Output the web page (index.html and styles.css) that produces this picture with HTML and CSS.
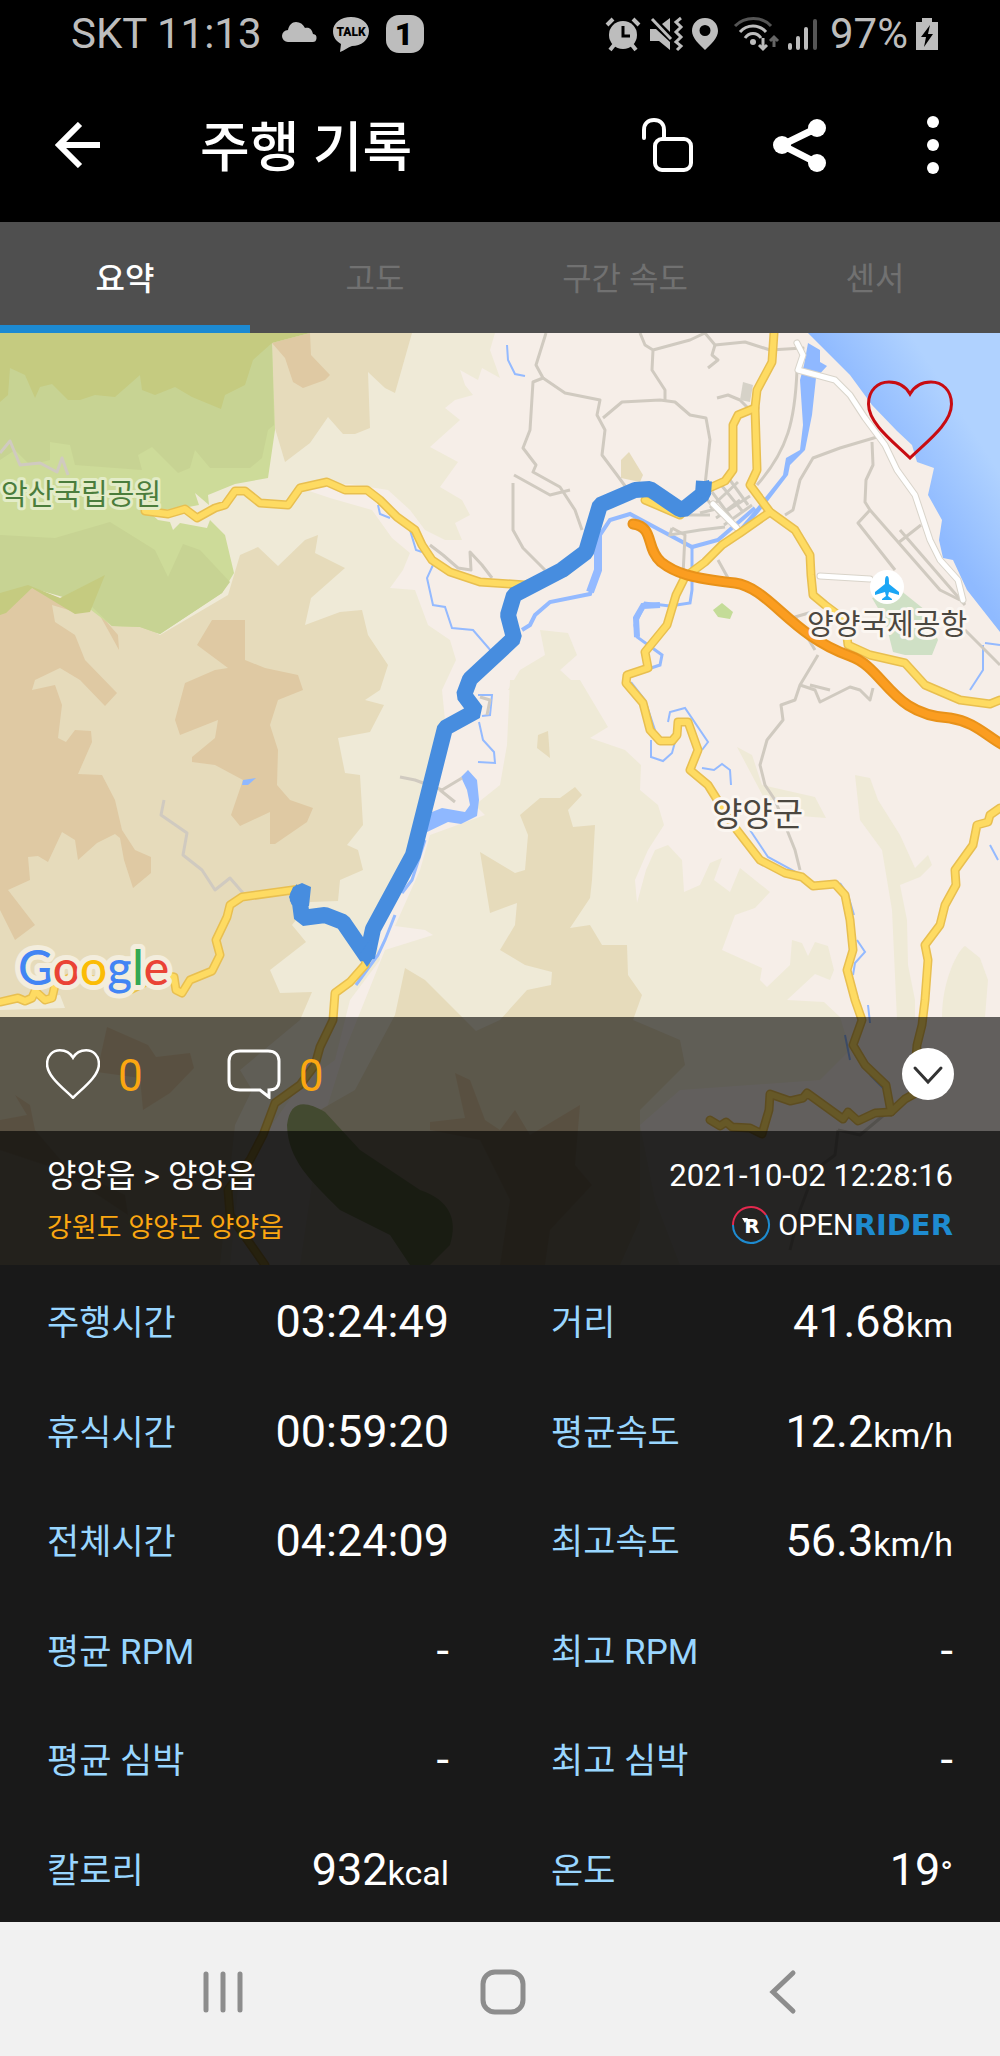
FILE: index.html
```html
<!DOCTYPE html>
<html lang="ko">
<head>
    <meta charset="UTF-8">
    <meta name="viewport" content="width=device-width, initial-scale=1.0">
    <title>주행 기록</title>
    <link rel="stylesheet" href="styles.css">
</head>
<body>
    <!-- shared shapes -->
    <svg class="defs" aria-hidden="true">
        <symbol id="heart" viewBox="0 0 86 80">
            <path d="M43 78 C28 63 1.500 44 1.500 24 C1.500 10 11 2 22 2 C32 2 39 7 43 14 C47 7 54 2 64 2 C75 2 84.500 10 84.500 24 C84.500 44 58 63 43 78 Z"/>
        </symbol>
    </svg>

    <div class="status-bar">
        <div class="status-left">
            <span class="status-text">SKT 11:13</span>
            <svg width="36" height="36" viewBox="0 0 36 36"><path d="M7 26 a6 6 0 0 1 0 -12 C8 9 11 6 15 6 C19 6 22 8 24 12 C29 11 31 14 32 18 a4 4 0 0 1 -1 8 Z" fill="#bdbdbd"/></svg>
            <svg width="38" height="38" viewBox="0 0 38 38">
                <path d="M19 2 C29 2 37 8 37 16 C37 25 29 31 20 31 C16 32 12 36 8 37 L9 29 C4 26 1 22 1 16 C1 8 9 2 19 2 Z" fill="#bdbdbd"/>
                <text x="19" y="21" class="talk">TALK</text>
            </svg>
            <svg width="40" height="40" viewBox="0 0 40 40">
                <rect x="1" y="1" width="38" height="38" rx="13" fill="#bdbdbd"/>
                <text x="19" y="31" class="one">1</text>
            </svg>
        </div>
        <div class="status-right">
            <!-- alarm -->
            <svg width="36" height="36" viewBox="0 0 36 36">
                <circle cx="18" cy="19" r="14" fill="#bdbdbd"/>
                <path d="M2 9 L8 3 M34 9 L28 3" stroke="#bdbdbd" stroke-width="4" fill="none"/>
                <path d="M5 34 L9 29 M31 34 L27 29" stroke="#bdbdbd" stroke-width="4"/>
                <path d="M18 10 V20 H25" stroke="#000" stroke-width="3" fill="none"/>
            </svg>
            <!-- mute / vibrate -->
            <svg width="36" height="36" viewBox="0 0 36 36">
                <path d="M2 13 H8 L22 26 V34 L11 25 H2 Z M14 8 L22 2 V16 Z" fill="#bdbdbd"/>
                <path d="M4 3 L23 23" stroke="#bdbdbd" stroke-width="3"/>
                <path d="M33 2 L28 6 L33 11 L28 16 L33 21 L28 26 L33 30 L29 34" stroke="#bdbdbd" stroke-width="3" fill="none"/>
            </svg>
            <svg width="28" height="36" viewBox="0 0 28 36"><path fill-rule="evenodd" d="M14 2 C6 2 1 8 1 15 C1 22 8 28 14 34 C20 28 27 22 27 15 C27 8 22 2 14 2 Z M14 9 a5 5 0 1 1 0 11 a5 5 0 1 1 0 -11 Z" fill="#bdbdbd"/></svg>
            <!-- wifi -->
            <svg width="54" height="36" viewBox="0 0 54 36" fill="none">
                <path d="M9 10 C19 0 36 0 45 10" stroke="#555" stroke-width="3"/>
                <path d="M14 16 C21 8 33 8 40 16" stroke="#bdbdbd" stroke-width="3"/>
                <path d="M19 22 C23 16 31 16 35 22" stroke="#bdbdbd" stroke-width="3"/>
                <circle cx="27" cy="26" r="3" fill="#bdbdbd"/>
                <path d="M37 22 V33 M33 29 L37 33 L41 29" stroke="#bdbdbd" stroke-width="3"/>
                <path d="M48 31 V21 M44 25 L48 21 L52 25" stroke="#666" stroke-width="3"/>
            </svg>
            <svg width="32" height="36" viewBox="0 0 32 36" stroke="#bdbdbd" stroke-width="4" stroke-linecap="round">
                <path d="M3 29 V32 M11 22 V32 M19 13 V32"/>
                <path d="M28 5 V32" stroke="#555"/>
            </svg>
            <span class="status-text status-battery">97%</span>
            <svg width="24" height="36" viewBox="0 0 24 36">
                <path d="M1 6 H7 V2 H17 V6 H23 V34 H1 Z" fill="#bdbdbd"/>
                <path d="M15 9 L6 21 H11 L9 31 L18 18 H13 Z" fill="#000"/>
            </svg>
        </div>
    </div>

    <header class="header">
        <button class="icon-btn" aria-label="뒤로">
            <svg width="46" height="46" viewBox="0 0 46 46" fill="none" stroke="#fff" stroke-width="6"><path d="M25 2 L4 23 L25 44 M4 23 H45"/></svg>
        </button>
        <h1>주행 기록</h1>
        <div class="header-actions">
            <button class="icon-btn" aria-label="공개 설정">
                <svg width="52" height="54" viewBox="0 0 52 54" fill="none" stroke="#fff" stroke-width="4" stroke-linecap="round"><path d="M3 20 V12 C3 6 7 2 13 2 C19 2 23 6 23 12 V20"/><rect x="14" y="21" width="36" height="31" rx="7"/></svg>
            </button>
            <button class="icon-btn" aria-label="공유">
                <svg width="54" height="54" viewBox="0 0 54 54" fill="#fff"><path d="M44 10 L9 27 L44 45" fill="none" stroke="#fff" stroke-width="7"/><circle cx="44" cy="10" r="9"/><circle cx="9" cy="27" r="9"/><circle cx="44" cy="45" r="9"/></svg>
            </button>
            <button class="icon-btn" aria-label="더보기">
                <svg width="12" height="58" viewBox="0 0 12 58" fill="#fff"><circle cx="6" cy="6" r="6"/><circle cx="6" cy="29" r="6"/><circle cx="6" cy="52" r="6"/></svg>
            </button>
        </div>
    </header>

    <nav class="tabs">
        <button class="active">요약</button>
        <button>고도</button>
        <button>구간 속도</button>
        <button>센서</button>
    </nav>

    <section class="map-box">
        <svg class="map" viewBox="0 333 1000 932" preserveAspectRatio="xMidYMid slice">
            <defs>
                <linearGradient id="sea" gradientUnits="userSpaceOnUse" x1="880" y1="440" x2="950" y2="395">
                    <stop offset="0" stop-color="#8fbaff"/>
                    <stop offset="1" stop-color="#b0d2ff"/>
                </linearGradient>
            </defs>

            <rect x="0" y="333" width="1000" height="932" fill="#f6eee8"/>

            <!-- low hills -->
            <g fill="#efead7">
                <path d="M0 333 H495 L490 350 L500 378 L482 368 L478 380 L460 370 L465 385 L473 395 L455 400 L445 408 L460 420 L430 447 L458 462 L440 487 L462 500 L470 515 L455 523 L462 540 L445 540 L425 530 L410 510 L388 490 L350 484 L300 488 L330 498 L372 510 L392 538 L410 553 L403 570 L390 588 L415 590 L428 625 L450 640 L456 660 L442 690 L446 730 L425 780 L415 860 L372 920 L380 960 L350 1000 L335 1060 L300 1085 L240 1170 L230 1265 H0 Z"/>
                <path d="M510 680 L580 680 L608 727 L590 738 L625 750 L641 765 L640 790 L658 805 L664 825 L648 850 L635 880 L637 903 L646 870 L655 850 L668 845 L682 860 L684 892 L700 885 L710 863 L722 858 L714 880 L730 892 L740 868 L770 892 L755 908 L735 915 L722 950 L762 968 L760 980 L767 987 L790 965 L792 940 L802 943 L808 956 L815 942 L828 946 L834 970 L830 980 L815 974 L787 1000 L824 1002 L840 1017 L850 1050 L820 1080 L680 1090 L640 1125 L655 1200 L680 1265 H300 L320 1130 L345 1050 L385 950 L433 935 L425 930 L395 926 L420 870 L430 835 L485 815 L475 805 L500 785 L507 745 Z"/>
                <path d="M737 747 L752 755 L762 785 L815 797 L826 818 L800 816 L785 800 L765 800 Z"/>
                <path d="M855 775 L870 778 L878 800 L900 835 L915 868 L928 855 L932 865 L920 877 L900 885 L907 920 L908 965 L915 1000 V1020 H897 L892 910 L882 850 L860 820 Z"/>
                <path d="M942 1017 C942 980 958 950 965 946 L980 958 L988 980 L985 1017 Z"/>
                <path d="M540 630 L568 633 L577 655 L560 670 L582 690 H508 L520 670 L545 655 Z"/>
            </g>

            <g fill="#e6dbbb">
                <path d="M0 600 L100 600 L160 635 L228 595 L240 555 L258 547 L278 566 L305 540 L318 535 L315 553 L345 568 L311 598 L305 625 L340 612 L362 610 L368 635 L388 665 L380 690 L365 700 L384 705 L370 732 L338 738 L345 773 L360 775 L363 825 L347 845 L358 850 L363 870 L340 880 L338 901 L310 902 L292 925 L306 942 L270 970 L280 993 L312 992 L300 1020 L240 1070 L252 1090 L235 1125 L220 1265 H0 V1010 L65 1008 L60 995 L0 1000 Z"/>
                <path d="M272 343 L310 333 H412 L395 393 L385 388 L368 372 L370 428 L355 434 L343 434 L328 417 L310 443 L285 462 L274 425 Z"/>
                <path d="M480 852 L515 873 L525 870 L528 835 L520 815 L540 798 L560 798 L575 787 L582 795 L568 810 L573 827 L595 825 L592 880 L590 898 L570 928 L590 925 L602 945 L627 945 L628 975 L642 995 L633 1020 L680 1040 L685 1065 L640 1110 L640 1220 L620 1265 H430 L345 1180 L320 1110 L355 1090 L395 1015 L405 968 L425 980 L476 1031 L500 1020 L527 990 L551 985 L552 972 L525 965 L500 950 L515 925 L517 903 L490 913 Z"/>
                <path d="M538 735 L548 731 L550 758 L537 748 Z M621 460 L629 452 L643 475 L640 482 L621 478 Z"/>
            </g>

            <g fill="#dfc9a3">
                <path d="M0 615 L32 588 L65 600 L92 605 L118 635 L119 650 L108 630 L95 607 L75 612 L52 605 L55 622 L75 635 L85 660 L117 693 L105 706 L80 680 L60 668 L35 680 L32 690 L55 685 L62 705 L58 738 L66 742 L75 730 L91 731 L92 742 L78 774 L102 775 L115 800 L122 830 L135 850 L151 857 L151 873 L133 888 L124 860 L120 838 L115 834 L97 843 L78 860 L75 840 L62 832 L48 862 L38 856 L28 857 L30 880 L8 890 L35 925 L15 940 L0 910 Z"/>
                <path d="M212 620 H245 L245 660 L265 668 L298 675 L303 690 L278 700 L270 725 L278 750 L277 785 L290 800 L313 808 L307 822 L275 844 H270 L270 812 L240 826 L231 815 L243 780 L215 765 L192 762 L192 757 L215 738 L218 720 L180 735 L175 720 L185 683 L215 670 L228 668 L197 645 Z"/>
                <path d="M272 343 L310 333 L311 355 L330 375 L325 380 L303 388 L293 382 L285 358 Z"/>
                <path d="M107 1027 L148 1045 L156 1057 L190 1053 L194 1068 L170 1093 L143 1110 L140 1078 L97 1072 Z"/>
                <path d="M15 1095 L30 1105 L35 1130 L65 1165 L125 1195 L128 1215 L60 1170 L0 1150 V1120 L27 1115 Z"/>
                <path d="M455 1073 L470 1080 L485 1120 L500 1130 L515 1110 L530 1135 L580 1105 L575 1165 L592 1185 L550 1230 L545 1265 H500 L510 1200 L480 1140 L430 1130 V1122 L465 1118 Z"/>
            </g>

            <!-- national park -->
            <path fill="#cddb99" d="M0 333 H280 L272 343 L275 430 L268 478 L235 484 L208 495 L209 505 L195 493 L199 505 L173 510 L145 508 L158 520 L170 522 L173 530 L180 523 L207 528 L210 520 L225 535 L234 573 L222 593 L160 634 L140 627 L112 626 L78 600 L32 588 L0 615 Z"/>
            <path fill="#c7d393" d="M0 333 H280 L272 343 L274 425 L268 430 L262 458 L250 468 L210 468 L195 450 L190 468 L178 473 L152 447 L138 455 L142 470 L75 465 L70 445 L50 442 L50 460 L30 465 L15 450 L0 460 Z M0 535 L55 538 L110 522 L155 550 L168 577 L183 544 L200 550 L230 582 L222 593 L160 634 L140 627 L112 626 L90 605 L32 588 L0 615 Z"/>
            <path fill="#c5cb80" d="M0 333 H310 L272 343 L253 360 L245 385 L225 395 L221 409 L192 397 L175 387 L155 395 L142 390 L140 375 L115 397 L95 395 L80 400 L68 400 L52 384 L40 387 L35 398 L25 375 L10 368 L8 395 L0 402 Z M0 593 L28 585 L60 598 L105 575 L90 612 L75 614 L32 588 L6 613 L0 615 Z"/>
            <path fill="#c4dc98" d="M713 610 L722 603 L733 612 L730 619 L718 617 Z"/>
            <path fill="#cfe0c5" d="M872 598 L900 590 L925 610 L938 640 L932 655 L905 655 L893 652 L885 620 Z"/>
            <path fill="#a8b878" d="M287 1125 C290 1100 305 1100 325 1112 L360 1150 L420 1190 C450 1200 458 1220 450 1245 L430 1265 H410 L390 1235 L340 1210 C310 1180 288 1160 287 1125 Z"/>

            <!-- sea and rivers -->
            <path fill="url(#sea)" d="M808 333 H1000 V632 L967 590 L953 560 L943 558 L939 540 L942 520 L928 495 L934 468 L917 462 L912 445 L897 431 L872 405 L850 375 L820 345 Z"/>
            <path fill="#8fb8ff" d="M808 343 L820 350 L820 362 L827 366 L816 378 L812 415 L805 450 L790 465 L788 475 L765 505 L742 533 L738 530 L755 510 L783 475 L786 458 L800 450 L803 425 L800 380 L804 365 Z"/>
            <path fill="#8fb8ff" d="M468 770 L477 780 L479 800 L477 816 L461 824 L448 822 L425 833 L420 840 L432 812 L442 808 L465 812 L470 805 L467 790 L461 777 Z M243 780 L256 778 L248 785 L242 785 Z"/>
            <g fill="none" stroke="#94baff" stroke-width="4">
                <path d="M755 508 L718 540 L692 547 L660 530 L630 514 L610 520 L600 535 L598 570 L590 594 L550 602 L535 615 L530 625 L522 630"/>
                <path d="M598 535 V570 L590 592" stroke-width="8"/>
                <path d="M692 547 L692 590 L690 603 L670 606 L645 603 L635 625 L637 637 L662 655 L660 665 L645 670" stroke-width="3"/>
                <path d="M660 605 L643 606 L636 618 L637 637" stroke-width="6"/>
                <path d="M425 840 L412 880 L402 893 M395 915 L385 940 L378 955 L356 985" stroke-width="3"/>
                <path d="M631 682 L645 700 L655 730 M651 740 V757 L663 761 L672 753 L675 742 M668 722 L670 712 L685 708 L708 742 L702 750 M702 768 L714 770 L722 764 L730 770 L731 785 M750 830 L768 857 L805 877 L812 883 M840 883 L848 895 L854 915 M857 940 L865 952 L855 963 L853 975 M868 1005 L870 1023" stroke-width="2"/>
                <path d="M378 505 L380 514 L390 518 M410 530 L416 550 L422 552 M433 565 L427 578 L433 605 L445 607 L452 628 L473 630 L492 652" stroke-width="2"/>
                <path d="M478 695 L492 695 L490 715 L482 716 M479 722 L483 740 L494 752 L495 763 L478 762" stroke-width="2"/>
                <path d="M507 345 L508 360 L515 374 L525 376 M983 645 L983 670 L970 690 M1000 645 L985 643 M990 845 L998 860 M845 1035 L850 1060 M870 1075 L885 1090" stroke-width="2"/>
            </g>

            <!-- small roads -->
            <g fill="none" stroke="#d0cac0" stroke-width="3" stroke-linejoin="round">
                <path d="M546 333 L536 365 L543 378 L533 382 L530 430 L523 448 L536 465 L533 472 L560 487 L575 510 L582 530"/>
                <path d="M543 378 L565 393 L600 400 L597 415 L605 430 L602 455 L617 475 L628 490"/>
                <path d="M640 333 L645 345 L653 350 L652 370 L665 390 L665 400 M653 350 L690 340 L705 333 L715 345 L745 342 L770 350 L803 348 L800 360"/>
                <path d="M715 345 L712 355 L718 360 L708 368 M603 418 L622 402 L660 400 L675 402 L690 415 L706 418 L710 440 L705 485"/>
                <path d="M797 370 C795 420 788 450 757 485 M514 475 L550 495 L570 490 M513 483 V530 L523 548 L540 565 L545 570"/>
                <path d="M877 437 L840 448 L813 458 L800 480 L793 510 L785 515 M872 442 L873 465 L866 480 L865 502 L870 510 L858 523 L895 570 M870 510 L940 590 L960 600 M898 543 L921 525"/>
                <path d="M717 398 L728 395 L740 400 L750 410 M818 655 L800 685 L795 700 L781 705 L783 720 L767 740 L760 765 L765 785 L775 800 L785 825 L795 850 L800 870"/>
                <path d="M800 685 L815 690 L820 702 L850 687 L860 690 L870 700 L873 688 M810 685 L830 690"/>
                <path d="M0 453 L10 441 L20 465 L40 463 L57 472 L62 458 L68 475"/>
                <path d="M164 800 L161 815 L187 833 L183 855 L202 870 L215 890 L230 878 L243 893"/>
                <path d="M430 545 L443 555 L458 568 L471 570 L470 552 L482 565 L492 578 M400 777 L415 780 L442 790 L462 778 M440 790 L455 802 M480 697 L490 700 L487 715"/>
                <path d="M672 528 L685 535 L683 575 M718 560 L728 578 M812 612 L795 617 L815 650 M965 630 L1000 665 M965 605 L900 530"/>
                <path d="M838 1130 L835 1155 L815 1170 L800 1210 L790 1250 M890 1110 L860 1135 L838 1130"/>
            </g>
            <!-- town blocks -->
            <g fill="none" stroke="#cfcbc2" stroke-width="3">
                <path d="M705 497 L720 515 L740 500 M712 492 L733 520 M722 486 L743 512 M730 480 L748 505 M710 508 L738 482 M716 518 L750 496 M724 525 L752 505 M700 513 L720 508"/>
                <path d="M672 528 L670 535 L700 530 L725 527 M685 515 L710 515"/>
            </g>
            <path fill="#d6d2c8" d="M743 382 L753 385 L750 402 L740 400 Z"/>

            <g fill="none" stroke-linejoin="round" stroke-linecap="round">
                <g stroke="#d9d4ca" stroke-width="7">
                    <path d="M797 343 L803 355 L798 370 L835 380 L850 395 L865 418 L885 445 L897 470 L915 495 L930 540 L940 560 L958 580 L963 600"/>
                    <path d="M820 576 L870 579 M713 504 L737 528"/>
                </g>
                <g stroke="#fff" stroke-width="5">
                    <path d="M797 343 L803 355 L798 370 L835 380 L850 395 L865 418 L885 445 L897 470 L915 495 L930 540 L940 560 L958 580 L963 600"/>
                    <path d="M820 576 L870 579 M713 504 L737 528"/>
                </g>
            </g>

            <!-- national roads: casing, then fill -->
            <defs>
                <g id="roads" fill="none" stroke-linejoin="round" stroke-linecap="round">
                    <path d="M145 511 L168 514 L185 509 L197 518 L215 508 L225 505 L235 491 L245 491 L260 503 L288 505 L300 488 L327 482 L345 490 L367 490 L380 500 L397 517 L415 530 L422 545 L432 560 L450 572 L480 582 L525 585 L565 572 L590 550"/>
                    <path d="M774 333 L772 362 L757 390 L755 408 L757 470 L750 485 L770 512 L795 530 L810 555 L811 575 L813 595 L825 605 L845 620 L848 645 L870 655 L905 663 L925 685 L960 700 L990 704 L1000 700"/>
                    <path d="M755 408 L738 415 L733 425 L733 470 L725 481 L705 490 L680 515 L645 500"/>
                    <path d="M770 512 L740 533 L722 545 L705 562 L685 577 L676 595 L667 625 L645 652 L648 668 L627 675 L626 683 L643 703 L650 730 L660 741 L672 741 L677 735 L678 722 L688 722 L698 750 L690 770 L708 785 L733 825 L760 860 L785 873 L802 877 L813 886 L835 884 L845 895 L850 920 L853 950 L847 970 L855 1000 L862 1020 L853 1045 L865 1065 L886 1085 L891 1112"/>
                    <path d="M710 1120 L720 1126 L726 1122 L732 1127 L750 1128 L762 1134 L769 1110 L770 1094 L790 1101 L803 1098 L807 1093 L843 1119 L848 1112 L858 1121 L875 1113 L891 1112 L905 1099 L925 1088"/>
                    <path d="M1000 808 L990 815 L988 822 L977 825 L973 845 L955 870 L956 885 L945 905 L940 925 L925 945 L928 960 L925 1000 L922 1025 L917 1045 L915 1070"/>
                    <path d="M0 1002 L18 998 L25 1001 L32 998 L35 991 L45 1000 L52 998 L55 985 L75 975 L130 990 L160 975 L174 977 L176 990 L182 993 L190 980 L212 971 L220 955 L216 940 L227 917 L230 905 L242 897 L300 889"/>
                    <path d="M372 935 L365 965 L350 982 L335 993 L333 1020 L320 1047 L315 1065 L300 1085 L275 1103 L263 1135 L250 1160 L228 1190 L230 1215 L265 1265"/>
                </g>
            </defs>
            <use href="#roads" stroke="#e8bf50" stroke-width="9"/>
            <use href="#roads" stroke="#fedb62" stroke-width="6"/>

            <g fill="none" stroke-linejoin="round" stroke-linecap="round">
                <path stroke="#e8921a" stroke-width="11" d="M633 524 C655 527 645 548 661 562 C675 573 690 578 735 583 C770 588 790 635 850 656 C885 668 890 715 950 718 C975 722 985 735 1003 745"/>
                <path stroke="#fb9d20" stroke-width="7" d="M633 524 C655 527 645 548 661 562 C675 573 690 578 735 583 C770 588 790 635 850 656 C885 668 890 715 950 718 C975 722 985 735 1003 745"/>
            </g>

            <!-- ridden track -->
            <path class="track" d="M704 481 L703 494 L683 510 L678 508 L650 489 L635 490 L600 505 L586 552 L562 570 L514 595 L508 615 L514 638 L470 679 L464 695 L476 711 L445 728 L413 855 L373 929 L367 957 L343 922 L325 915 L302 918 L300 903 L297 897 L303 889"/>
            <path fill="#478ddf" d="M696 483 L709 480 L711 494 L697 500 Z M289 897 L293 887 L302 883 L311 887 L309 906 L292 905 Z M359 955 L367 967 L374 957 L370 940 Z"/>

            <circle cx="887" cy="587" r="17" fill="#fff"/>
            <path fill="#1ba6f5" d="M887 576 C889 576 889 580 889 584 L899 592 V595 L889 592 L888 596 L892 599 V600 H882 V599 L886 596 L885 592 L875 595 V592 L885 584 C885 580 885 576 887 576 Z"/>

            <text x="1" y="505" class="map-label park">악산국립공원</text>
            <text x="807" y="635" class="map-label">양양국제공항</text>
            <text x="712" y="826" class="map-label town">양양군</text>
            <text x="18" y="985" class="google"><tspan fill="#4285f4">G</tspan><tspan fill="#ea4335">o</tspan><tspan fill="#fbbc05">o</tspan><tspan fill="#4285f4">g</tspan><tspan fill="#34a853">l</tspan><tspan fill="#ea4335">e</tspan></text>
        </svg>

        <button class="icon-btn like-btn" aria-label="좋아요">
            <svg width="86" height="80" fill="none" stroke="#c80c12" stroke-width="3"><use href="#heart"/></svg>
        </button>

        <div class="map-footer">
            <div class="social">
                <button class="count-btn" aria-label="좋아요 수">
                    <svg width="54" height="50" fill="none" stroke="#fff" stroke-width="4"><use href="#heart"/></svg>
                    <span>0</span>
                </button>
                <button class="count-btn" aria-label="댓글 수">
                    <svg width="54" height="50" viewBox="0 0 54 50" fill="none" stroke="#fff" stroke-width="3"><path d="M13 2 H41 C48 2 52 6 52 12 V32 C52 38 48 41 42 41 L42 48 L33 41 H13 C6 41 2 38 2 32 V12 C2 6 6 2 13 2 Z"/></svg>
                    <span>0</span>
                </button>
                <button class="icon-btn fold-btn" aria-label="접기">
                    <svg width="52" height="52" viewBox="0 0 52 52" fill="none"><circle cx="26" cy="26" r="26" fill="#fff"/><path d="M13 20 L26 34 L39 20" stroke="#333" stroke-width="3" stroke-linecap="round"/></svg>
                </button>
            </div>
            <div class="ride-info">
                <div class="ride-row">
                    <h2>양양읍 &gt; 양양읍</h2>
                    <time>2021-10-02 12:28:16</time>
                </div>
                <div class="ride-row sub">
                    <p>강원도 양양군 양양읍</p>
                    <div class="brand">
                        <svg width="40" height="40" viewBox="0 0 40 40" fill="none" stroke-width="2">
                            <path d="M2 20 A18 18 0 0 1 35 10" stroke="#e3294e"/>
                            <path d="M35 10 A18 18 0 1 1 2 20" stroke="#1e8bd0"/>
                            <path d="M11 13 L17 13 L14 18 Z" fill="#fff"/>
                            <text x="21" y="28" class="brand-r">R</text>
                        </svg>
                        <span class="brand-open">OPEN</span><span class="brand-rider">RIDER</span>
                    </div>
                </div>
            </div>
        </div>
    </section>

    <dl class="stats">
        <div><dt>주행시간</dt><dd>03:24:49</dd></div>
        <div><dt>거리</dt><dd>41.68<small>km</small></dd></div>
        <div><dt>휴식시간</dt><dd>00:59:20</dd></div>
        <div><dt>평균속도</dt><dd>12.2<small>km/h</small></dd></div>
        <div><dt>전체시간</dt><dd>04:24:09</dd></div>
        <div><dt>최고속도</dt><dd>56.3<small>km/h</small></dd></div>
        <div><dt>평균 RPM</dt><dd>-</dd></div>
        <div><dt>최고 RPM</dt><dd>-</dd></div>
        <div><dt>평균 심박</dt><dd>-</dd></div>
        <div><dt>최고 심박</dt><dd>-</dd></div>
        <div><dt>칼로리</dt><dd>932<small>kcal</small></dd></div>
        <div><dt>온도</dt><dd>19<small>°</small></dd></div>
    </dl>

    <nav class="nav-bar">
        <button class="icon-btn" aria-label="최근 앱">
            <svg width="46" height="46" viewBox="0 0 46 46" stroke="#8d8d8d" stroke-width="5" stroke-linecap="round"><path d="M6 5 V41 M23 5 V41 M40 5 V41"/></svg>
        </button>
        <button class="icon-btn" aria-label="홈">
            <svg width="46" height="46" viewBox="0 0 46 46" fill="none" stroke="#8d8d8d" stroke-width="5"><rect x="3" y="3" width="40" height="40" rx="12"/></svg>
        </button>
        <button class="icon-btn" aria-label="뒤로 가기">
            <svg width="46" height="46" viewBox="0 0 46 46" fill="none" stroke="#8d8d8d" stroke-width="5" stroke-linecap="round"><path d="M33 4 L13 23 L33 42"/></svg>
        </button>
    </nav>
</body>
</html>
```
FILE: styles.css
```css
* {
    box-sizing: border-box;
}

body {
    margin: 0;
    min-height: 100vh;
    display: flex;
    flex-direction: column;
    background-color: #191919;
    color: #fff;
    font-family: Roboto, "Noto Sans CJK KR", sans-serif;
}

h1, h2, p, dl, dd {
    margin: 0;
    font-weight: normal;
}

button {
    border: none;
    padding: 0;
    background: none;
    color: inherit;
    font-family: inherit;
    cursor: pointer;
}

svg {
    display: block;
    flex-shrink: 0;
}

.defs {
    position: absolute;
    width: 0;
    height: 0;
}

/* status bar */
.status-bar {
    display: flex;
    justify-content: space-between;
    align-items: center;
    height: 68px;
    padding: 0 61px 0 71px;
    background-color: #000;
    color: #bdbdbd;
}

.status-left {
    display: flex;
    align-items: center;
    gap: 15px;
}

.status-right {
    display: flex;
    align-items: center;
    gap: 7px;
}

.status-text {
    font-size: 42px;
    line-height: 48px;
}

.status-left .status-text {
    margin-right: 4px;
}

.status-battery {
    padding-left: 4px;
}

.talk {
    font-size: 12px;
    font-weight: 900;
    text-anchor: middle;
    fill: #000;
}

.one {
    font-size: 32px;
    font-weight: 900;
    text-anchor: middle;
    fill: #000;
}

.status-left svg {
    overflow: visible;
}

/* header */
.header {
    display: flex;
    align-items: center;
    height: 154px;
    padding: 0 61px 0 55px;
    background-color: #000;
}

.header h1 {
    margin-left: 99px;
    padding-top: 8px;
    flex-grow: 1;
    font-size: 54px;
    font-weight: 500;
    line-height: 64px;
}

.header-actions {
    display: flex;
    align-items: center;
    gap: 80px;
}

.header-actions .icon-btn:last-child {
    margin-left: 20px;
}

/* tabs */
.tabs {
    display: flex;
    height: 111px;
    background-color: #4f4f4f;
}

.tabs button {
    flex: 1;
    padding-top: 5px;
    border-bottom: 8px solid transparent;
    color: #717171;
    font-size: 32px;
}

.tabs button.active {
    border-bottom-color: #1c8ad2;
    color: #fff;
    font-weight: 500;
}

/* map */
.map-box {
    position: relative;
}

.map {
    width: 100%;
    height: auto;
}

.track {
    fill: none;
    stroke: #478ddf;
    stroke-width: 16px;
    stroke-linejoin: bevel;
}

.map-label {
    font-size: 29px;
    fill: #4b4740;
    stroke: #fbf6f1;
    stroke-width: 6px;
    stroke-linejoin: round;
    paint-order: stroke;
}

.map-label.park {
    fill: #4b7d3c;
    stroke: #e3ecc8;
}

.map-label.town {
    font-size: 33px;
}

.google {
    font-family: Lato, sans-serif;
    font-size: 48px;
    font-weight: 500;
    stroke: #f3eddd;
    stroke-width: 10px;
    stroke-linejoin: round;
    paint-order: stroke;
}

.like-btn {
    position: absolute;
    top: 47px;
    right: 47px;
}

.map-footer {
    position: absolute;
    left: 0;
    right: 0;
    bottom: 0;
}

.social {
    display: flex;
    align-items: center;
    gap: 84px;
    height: 114px;
    padding: 0 46px;
    background-color: rgba(0, 0, 0, 0.6);
}

.count-btn {
    display: flex;
    align-items: center;
    gap: 18px;
    color: #fba711;
    font-size: 44px;
    line-height: 52px;
}

.count-btn span {
    padding-top: 4px;
}

.fold-btn {
    margin-left: auto;
}

.ride-info {
    padding: 24px 47px 20px;
    background-color: rgba(0, 0, 0, 0.85);
}

.ride-row {
    display: flex;
    justify-content: space-between;
    align-items: center;
    height: 42px;
}

.ride-row h2 {
    font-size: 32px;
    line-height: 42px;
}

.ride-row time {
    font-size: 31px;
    line-height: 40px;
}

.ride-row.sub {
    height: 40px;
    margin-top: 8px;
}

.ride-row p {
    color: #fba711;
    font-size: 27px;
}

.brand {
    display: flex;
    align-items: center;
    line-height: 40px;
}

.brand-open {
    margin-left: 7px;
    font-size: 29px;
}

.brand-rider {
    color: #1e8bd0;
    font-family: "DejaVu Sans", sans-serif;
    font-size: 29px;
    font-weight: bold;
}

.brand-r {
    font-family: "DejaVu Sans", sans-serif;
    font-size: 20px;
    font-weight: bold;
    text-anchor: middle;
    fill: #fff;
}

/* ride numbers */
.stats {
    flex-grow: 1;
    display: grid;
    grid-template-columns: 1fr 1fr;
    grid-auto-rows: 1fr;
    column-gap: 102px;
    padding: 0 47px;
    background-color: #191919;
}

.stats div {
    display: flex;
    justify-content: space-between;
    align-items: center;
    min-height: 80px;
}

.stats dt {
    color: #99d6ff;
    font-size: 35px;
}

.stats dd {
    padding-top: 5px;
    font-size: 45px;
    line-height: 52px;
}

.stats small {
    font-size: 34px;
    line-height: 34px;
}

/* bottom buttons */
.nav-bar {
    display: grid;
    grid-template-columns: 1fr 1fr 1fr;
    place-items: center;
    height: 134px;
    padding: 6px 77px 0 83px;
    background-color: #f1f1f1;
}
```
